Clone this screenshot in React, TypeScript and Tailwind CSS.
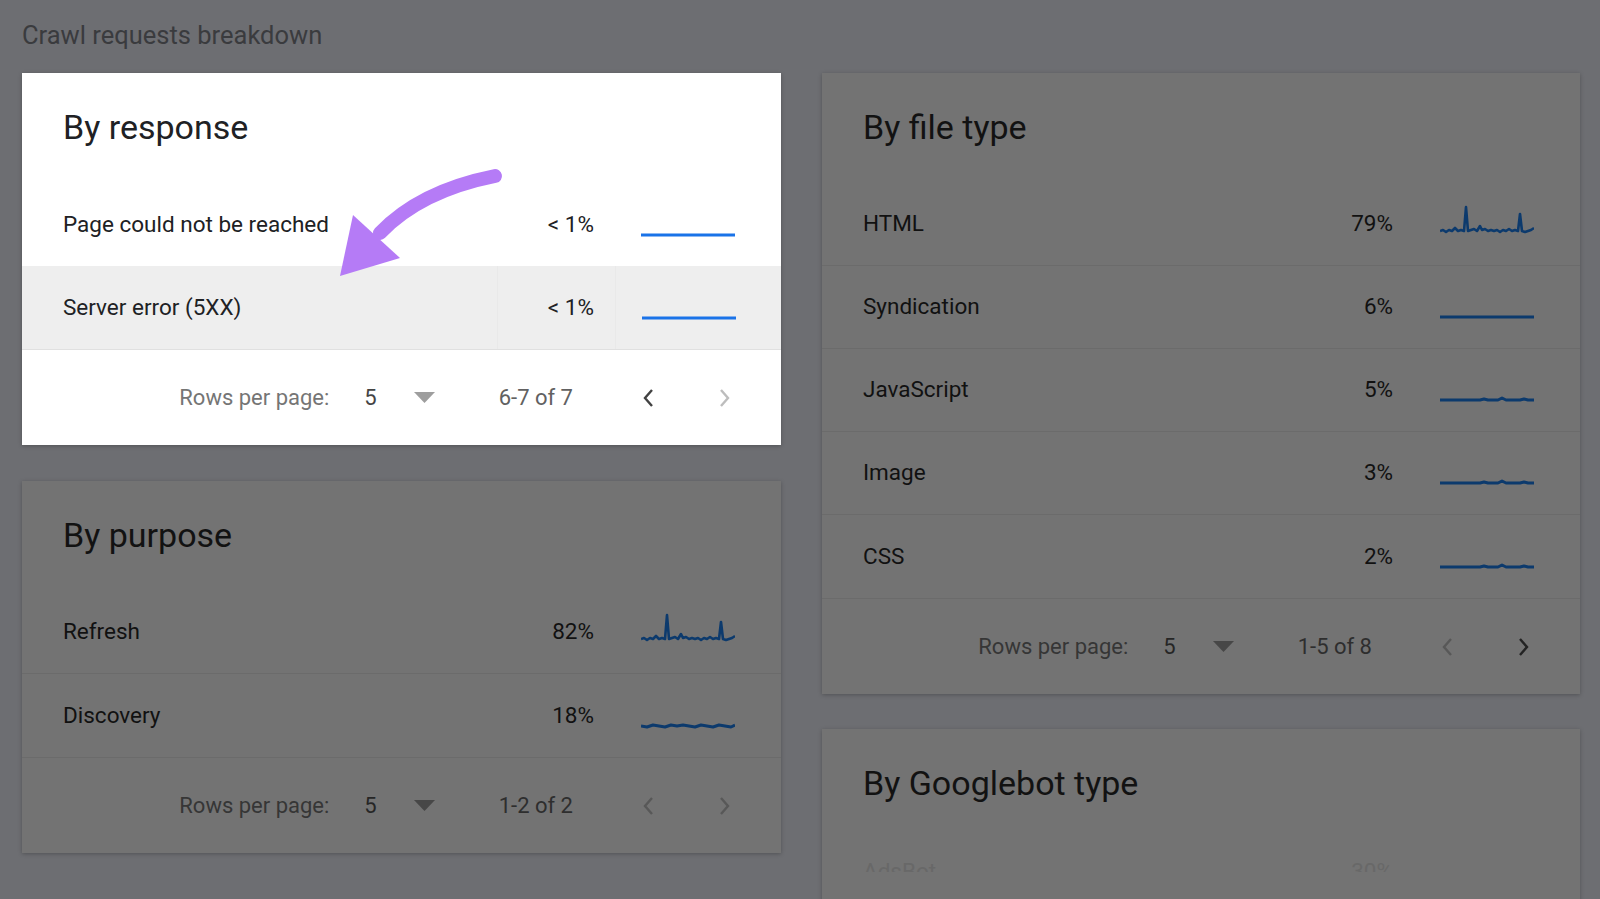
import React from "react";

type Row = {
  label: string;
  pct: string;
  spark: "flat" | "spiky" | "wavy" | "bumps";
  highlight?: boolean;
};

type CardProps = {
  title: string;
  rows: Row[];
  range: string;
  prevEnabled: boolean;
  nextEnabled: boolean;
  dim: boolean;
  children?: React.ReactNode;
};

const SPARKS: Record<Row["spark"], string> = {
  flat: "0,30 94,30",
  spiky:
    "0,27 3,26 6,28 9,26 12,27 15,24 18,27 21,26 24,27 26,3 28,27 31,26 34,25 37,27 40,22 42,26 45,25 48,27 51,26 54,27 57,26 60,28 63,26 66,27 69,25 72,27 75,26 78,27 80,10 82,27 85,28 88,27 91,26 94,24",
  wavy:
    "0,30 6,31 12,29 18,30 24,31 30,29 36,30 42,29 48,30 54,31 60,29 66,30 72,31 78,29 84,30 90,31 94,29",
  bumps: "0,30 40,30 44,29 48,30 58,30 62,28 66,30 80,30 84,29 88,30 94,30",
};

function Sparkline({ kind, dim }: { kind: Row["spark"]; dim: boolean }) {
  return (
    <svg width="94" height="40" viewBox="0 0 94 40" className="block">
      <polyline
        points={SPARKS[kind]}
        fill="none"
        stroke={dim ? "#0c3a6d" : "#1a73e8"}
        strokeWidth={kind === "spiky" ? 2.6 : 3}
        strokeLinejoin="round"
        strokeLinecap="butt"
      />
    </svg>
  );
}

function Chevron({ dir, color }: { dir: "left" | "right"; color: string }) {
  return (
    <svg width="24" height="24" viewBox="0 0 24 24" className="block">
      <polyline
        points={dir === "left" ? "15,4 8,12 15,20" : "9,4 16,12 9,20"}
        fill="none"
        stroke={color}
        strokeWidth="2.4"
      />
    </svg>
  );
}

function BreakdownCard({ title, rows, range, prevEnabled, nextEnabled, dim, children }: CardProps) {
  const c = dim
    ? {
        bg: "bg-[#737373]",
        title: "text-[#121212]",
        text: "text-[#111111]",
        border: "border-[#6b6b6b]",
        label: "text-[#363636]",
        num: "text-[#262626]",
        range: "text-[#2e2e2e]",
        tri: "#474747",
        on: "#232323",
        off: "#585858",
      }
    : {
        bg: "bg-white",
        title: "text-[#202124]",
        text: "text-[#202124]",
        border: "border-[#e0e0e0]",
        label: "text-[#757575]",
        num: "text-[#444444]",
        range: "text-[#616161]",
        tri: "#9e9e9e",
        on: "#424242",
        off: "#bdbdbd",
      };

  return (
    <div className={`relative ${c.bg} shadow-[0_1px_4px_rgba(0,0,0,0.25)]`}>
      <div className={`h-[110px] pl-[41px] pt-[34px] text-[34px] leading-[41px] ${c.title}`}>
        {title}
      </div>

      {rows.map((row, i) => (
        <div
          key={row.label}
          className={`flex h-[83px] items-stretch text-[22.5px] ${c.text} ${
            row.highlight ? "bg-[#eeeeee]" : ""
          } ${i < rows.length - 1 && !rows[i + 1].highlight ? `border-b ${c.border}` : ""}`}
        >
          <div className="flex flex-1 items-center pl-[41px]">{row.label}</div>
          <div
            className={`flex w-[118px] items-center justify-end pr-[21px] ${
              row.highlight ? "border-l border-[#e9e9e9]" : ""
            }`}
          >
            {row.pct}
          </div>
          <div
            className={`flex w-[166px] items-center pl-[26px] ${
              row.highlight ? "border-l border-[#e9e9e9]" : ""
            }`}
          >
            <Sparkline kind={row.spark} dim={dim} />
          </div>
        </div>
      ))}

      <div className={`flex h-[96px] items-center justify-end border-t pr-[45px] text-[22px] ${c.border}`}>
        <span className={c.label}>Rows per page:</span>
        <span className={`ml-[35px] ${c.num}`}>5</span>
        <svg width="21" height="11" viewBox="0 0 21 11" className="ml-[37px] block">
          <polygon points="0,0 21,0 10.5,11" fill={c.tri} />
        </svg>
        <span className={`ml-[64px] ${c.range}`}>{range}</span>
        <div className="ml-[64px]">
          <Chevron dir="left" color={prevEnabled ? c.on : c.off} />
        </div>
        <div className="ml-[51px]">
          <Chevron dir="right" color={nextEnabled ? c.on : c.off} />
        </div>
      </div>

      {children}
    </div>
  );
}

export default function App() {
  return (
    <div
      className="h-[899px] overflow-hidden bg-[#6d6e72] pl-[22px]"
      style={{ fontFamily: "Roboto, 'Liberation Sans', sans-serif" }}
    >
      <div className="pt-[19px] text-[25.5px] leading-[32px] text-[#3a3b3e]">Crawl requests breakdown</div>

      <div className="mt-[22px] flex gap-[41px]">
        <div className="flex w-[759px] flex-col gap-[36px]">
          <BreakdownCard
            title="By response"
            rows={[
              { label: "Page could not be reached", pct: "< 1%", spark: "flat" },
              { label: "Server error (5XX)", pct: "< 1%", spark: "flat", highlight: true },
            ]}
            range="6-7 of 7"
            prevEnabled
            nextEnabled={false}
            dim={false}
          >
            <svg
              className="pointer-events-none absolute left-0 top-0"
              width="759"
              height="372"
              viewBox="0 0 759 372"
            >
              <path
                d="M473 103 Q 398 118 358 160"
                fill="none"
                stroke="#b57bf6"
                strokeWidth="14"
                strokeLinecap="round"
              />
              <polygon points="318,203 331,142 378,185" fill="#b57bf6" />
            </svg>
          </BreakdownCard>

          <BreakdownCard
            title="By purpose"
            rows={[
              { label: "Refresh", pct: "82%", spark: "spiky" },
              { label: "Discovery", pct: "18%", spark: "wavy" },
            ]}
            range="1-2 of 2"
            prevEnabled={false}
            nextEnabled={false}
            dim
          />
        </div>

        <div className="flex w-[758px] flex-col gap-[35px]">
          <BreakdownCard
            title="By file type"
            rows={[
              { label: "HTML", pct: "79%", spark: "spiky" },
              { label: "Syndication", pct: "6%", spark: "flat" },
              { label: "JavaScript", pct: "5%", spark: "bumps" },
              { label: "Image", pct: "3%", spark: "bumps" },
              { label: "CSS", pct: "2%", spark: "bumps" },
            ]}
            range="1-5 of 8"
            prevEnabled={false}
            nextEnabled
            dim
          />

          <div className="h-[200px] overflow-hidden bg-[#737373] shadow-[0_1px_4px_rgba(0,0,0,0.25)]">
            <div className="h-[100px] pl-[41px] pt-[34px] text-[34px] leading-[41px] text-[#121212]">
              By Googlebot type
            </div>
            {/* the reference cuts this row off at the bottom edge */}
            <div className="flex h-[43px] items-start overflow-hidden pt-[29px] text-[22.5px] leading-[26px] text-[#686868]">
              <div className="flex-1 pl-[41px]">AdsBot</div>
              <div className="w-[118px] pr-[21px] text-right">30%</div>
              <div className="w-[166px]" />
            </div>
          </div>
        </div>
      </div>
    </div>
  );
}
